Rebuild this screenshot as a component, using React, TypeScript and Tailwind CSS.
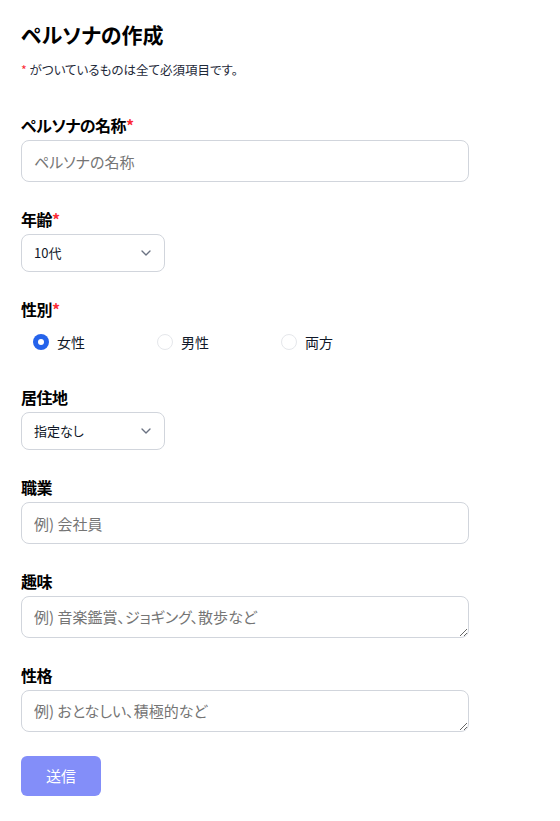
import { ChevronDown } from "lucide-react"
import { useState } from "react"

const font = { fontFamily: '"Noto Sans CJK JP", "Noto Sans", sans-serif' }

function Label({ text, required }: { text: string; required?: boolean }) {
  return (
    <label className="block h-6 mb-[3px] text-base leading-6 font-bold text-black tracking-[-0.5px]">
      {text}
      {required && <span className="text-red-500">*</span>}
    </label>
  )
}

function TextInput({ placeholder }: { placeholder: string }) {
  return (
    <input
      type="text"
      placeholder={placeholder}
      className="block w-[448px] h-[42px] px-3 rounded-lg border border-gray-300 bg-white text-[15px] text-gray-900 placeholder:text-[#757575] outline-none"
    />
  )
}

function TextArea({ placeholder }: { placeholder: string }) {
  return (
    <textarea
      rows={1}
      placeholder={placeholder}
      className="block w-[448px] h-[42px] px-3 py-2.5 leading-5 rounded-lg border border-gray-300 bg-white text-[15px] text-gray-900 placeholder:text-[#757575] outline-none"
    />
  )
}

function Select({ options }: { options: string[] }) {
  return (
    <div className="relative w-[144px]">
      <select className="block w-full h-[38px] pl-3 pr-8 appearance-none rounded-lg border border-gray-300 bg-white text-[13px] text-gray-900 outline-none">
        {options.map((o) => (
          <option key={o}>{o}</option>
        ))}
      </select>
      <ChevronDown
        size={16}
        strokeWidth={2}
        className="pointer-events-none absolute right-[11px] top-[11px] text-gray-500"
      />
    </div>
  )
}

function App() {
  const [gender, setGender] = useState("女性")

  return (
    <div className="min-h-screen bg-white px-[21px] pt-5 pb-6 [font-feature-settings:'palt']" style={font}>
      <h1 className="text-[21px] leading-7 font-bold text-black">ペルソナの作成</h1>
      <p className="mt-[14px] text-[12.5px] leading-4 text-gray-800">
        <span className="text-red-500">*</span> がついているものは全て必須項目です。
      </p>

      <form className="mt-[35px] flex flex-col gap-[25px]" onSubmit={(e) => e.preventDefault()}>
        <div>
          <Label text="ペルソナの名称" required />
          <TextInput placeholder="ペルソナの名称" />
        </div>

        <div>
          <Label text="年齢" required />
          <Select options={["10代", "20代", "30代", "40代", "50代", "60代以上"]} />
        </div>

        <div>
          <Label text="性別" required />
          <div className="flex h-9 items-center pl-3">
            {["女性", "男性", "両方"].map((g) => (
              <button
                type="button"
                key={g}
                onClick={() => setGender(g)}
                className="flex w-[124px] items-center gap-2 text-sm text-gray-900"
              >
                {gender === g ? (
                  <span className="flex h-4 w-4 items-center justify-center rounded-full bg-[#2563eb]">
                    <span className="h-1.5 w-1.5 rounded-full bg-white" />
                  </span>
                ) : (
                  <span className="h-4 w-4 rounded-full border border-gray-200 bg-white" />
                )}
                {g}
              </button>
            ))}
          </div>
        </div>

        <div>
          <Label text="居住地" />
          <Select options={["指定なし", "北海道", "東京都", "大阪府"]} />
        </div>

        <div>
          <Label text="職業" />
          <TextInput placeholder="例) 会社員" />
        </div>

        <div>
          <Label text="趣味" />
          <TextArea placeholder="例) 音楽鑑賞、ジョギング、散歩など" />
        </div>

        <div>
          <Label text="性格" />
          <TextArea placeholder="例) おとなしい、積極的など" />
        </div>

        <button
          type="submit"
          className="-mt-px w-20 h-10 rounded-md bg-[#838ef9] text-[15px] text-white"
        >
          送信
        </button>
      </form>
    </div>
  )
}

export default App
